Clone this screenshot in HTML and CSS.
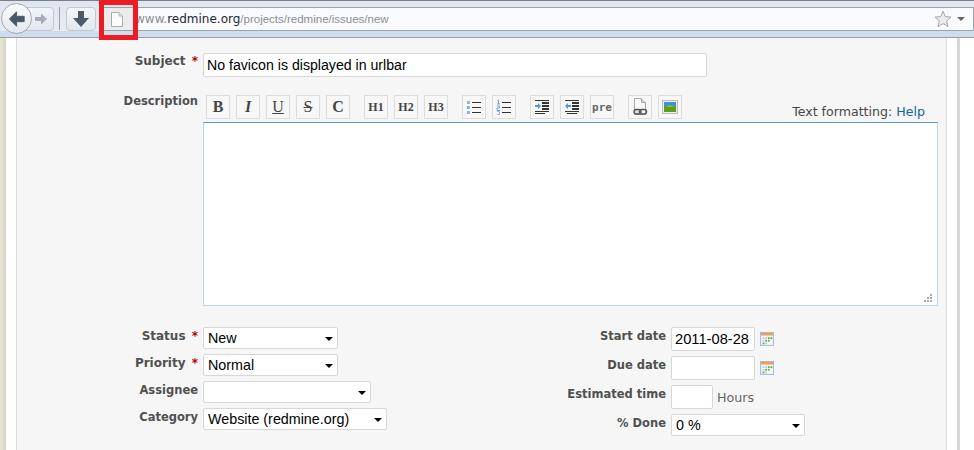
FILE: index.html
```html
<!DOCTYPE html>
<html lang="en">
<head>
<meta charset="utf-8">
<title>New issue</title>
<link rel="stylesheet" href="styles.css">
</head>
<body>
<header class="browser">
  <div class="toolbar">
    <div class="nav">
      <div class="fwd"><svg width="16" height="16" viewBox="0 0 16 16"><path d="M8 2.5 14 8 8 13.5V10H2V6H8Z" fill="#a4adb8"/></svg></div>
      <div class="back"><svg width="18" height="18" viewBox="0 0 20 20"><path d="M9.5 2 1.5 10 9.5 18V13H18V7H9.5Z" fill="#4a5866" stroke="#4a5866" stroke-linejoin="round"/></svg></div>
    </div>
    <div class="sep"></div>
    <div class="dl"><svg width="18" height="18" viewBox="0 0 18 18"><path d="M6 1H12V8H17L9 17 1 8H6Z" fill="#4d5a68"/></svg></div>
    <div class="urlbar">
      <div class="identity"><svg width="14" height="17" viewBox="0 0 14 17"><path d="M1.5 1.5H9L12.5 5V15.5H1.5Z" fill="#fbfbfb" stroke="#a9a9a9"/><path d="M9 1.5V5H12.5" fill="#e8e8e8" stroke="#b5b5b5"/></svg></div>
      <div class="url"><span class="dim">www.</span>redmine.org<span class="dim path">/projects/redmine/issues/new</span></div>
      <svg class="star" width="18" height="18" viewBox="0 0 18 18"><path d="M9 1.2 11.3 6.6 17 7.1 12.7 10.9 14 16.6 9 13.6 4 16.6 5.3 10.9 1 7.1 6.7 6.6Z" fill="#ececec" stroke="#a8a8a8"/></svg>
      <div class="drop"></div>
    </div>
  </div>
  <div class="strip"></div>
</header>

<div class="page">
  <div class="edge"></div>
  <main class="form">
    <div class="row subject-row">
      <label class="label must">Subject <span class="req">*</span></label>
      <input class="field subject" type="text" value="No favicon is displayed in urlbar">
    </div>

    <div class="row desc-head">
      <label class="label">Description</label>
      <div class="wiki">
        <div class="tools">
          <div class="group">
            <span class="tb b">B</span>
            <span class="tb i">I</span>
            <span class="tb u">U</span>
            <span class="tb s">S</span>
            <span class="tb b">C</span>
          </div>
          <div class="group">
            <span class="tb h">H1</span>
            <span class="tb h">H2</span>
            <span class="tb h">H3</span>
          </div>
          <div class="group">
            <span class="tb"><svg width="16" height="16" viewBox="0 0 16 16"><g fill="#8fb4e6"><rect x="1" y="2" width="3" height="3"/><rect x="1" y="7" width="3" height="3"/><rect x="1" y="12" width="3" height="3"/></g><g fill="#333"><rect x="6" y="3" width="9" height="1"/><rect x="6" y="8" width="9" height="1"/><rect x="6" y="13" width="9" height="1"/></g></svg></span>
            <span class="tb"><svg width="16" height="16" viewBox="0 0 16 16"><g fill="none" stroke="#6fa0e0"><path d="M1.5 1.5 2.5 1V5M1 5H4"/><path d="M1 7H3.5V9H1V11.5H4"/></g><path d="M1 12.5H3.5V15.5H1" fill="none" stroke="#8fb4e6"/><g fill="#333"><rect x="6" y="3" width="9" height="1"/><rect x="6" y="8" width="9" height="1"/><rect x="6" y="13" width="9" height="1"/></g></svg></span>
          </div>
          <div class="group">
            <span class="tb"><svg width="16" height="16" viewBox="0 0 16 16"><g fill="#333"><rect x="1" y="1" width="14" height="1"/><rect x="8" y="3" width="7" height="2"/><rect x="8" y="6" width="7" height="2"/><rect x="8" y="9" width="7" height="2"/><rect x="1" y="12" width="14" height="1"/><rect x="1" y="14" width="10" height="1"/></g><path d="M1 6H4V4L7 7 4 10V8H1Z" fill="#5b93dc"/></svg></span>
            <span class="tb"><svg width="16" height="16" viewBox="0 0 16 16"><g fill="#333"><rect x="1" y="1" width="14" height="1"/><rect x="8" y="3" width="7" height="2"/><rect x="8" y="6" width="7" height="2"/><rect x="8" y="9" width="7" height="2"/><rect x="1" y="12" width="14" height="1"/><rect x="3" y="14" width="10" height="1"/></g><path d="M7 6H4V4L1 7 4 10V8H7Z" fill="#5b93dc"/></svg></span>
            <span class="tb pre">pre</span>
          </div>
          <div class="group">
            <span class="tb"><svg width="18" height="20" viewBox="0 0 18 20"><path d="M3.5 1.5H10.5L14.5 5.5V17.5H3.5Z" fill="#fafafa" stroke="#a8a8a8"/><path d="M10.5 1.5V5.5H14.5" fill="#ddd" stroke="#a8a8a8"/><rect x="3" y="12.5" width="7" height="4.5" rx="2.2" fill="#ddd" stroke="#555" stroke-width="1.4"/><rect x="8.5" y="12.5" width="7" height="4.5" rx="2.2" fill="none" stroke="#555" stroke-width="1.4"/></svg></span>
            <span class="tb"><svg width="16" height="14" viewBox="0 0 16 14"><rect x=".5" y=".5" width="15" height="13" fill="#eee" stroke="#bbb"/><rect x="2" y="2" width="12" height="5" fill="#3f8fdc"/><rect x="2" y="6" width="12" height="6" fill="#5c9e1e"/><path d="M4 7 8 5 12 7Z" fill="#8cc43c"/></svg></span>
          </div>
        </div>
        <div class="help">Text formatting: <a href="#">Help</a></div>
      </div>
    </div>

    <div class="area">
      <textarea class="desc"></textarea>
      <svg class="grip" width="9" height="9" viewBox="0 0 9 9"><g fill="#aaa"><rect x="6" y="0" width="2" height="2"/><rect x="3" y="3" width="2" height="2"/><rect x="6" y="3" width="2" height="2"/><rect x="0" y="6" width="2" height="2"/><rect x="3" y="6" width="2" height="2"/><rect x="6" y="6" width="2" height="2"/></g></svg>
    </div>

    <div class="attrs">
      <div class="col left">
        <div class="row sel-row">
          <label class="label must">Status <span class="req">*</span></label>
          <div class="pick w-status"><select><option>New</option></select></div>
        </div>
        <div class="row sel-row">
          <label class="label must">Priority <span class="req">*</span></label>
          <div class="pick w-status"><select><option>Normal</option></select></div>
        </div>
        <div class="row sel-row">
          <label class="label">Assignee</label>
          <div class="pick w-assignee"><select><option></option></select></div>
        </div>
        <div class="row sel-row">
          <label class="label">Category</label>
          <div class="pick w-category"><select><option>Website (redmine.org)</option></select></div>
        </div>
      </div>
      <div class="col right">
        <div class="row date-row">
          <label class="label">Start date</label>
          <input class="field date" type="text" value="2011-08-28">
          <svg class="cal" width="14" height="14" viewBox="0 0 16 16"><use href="#calendar"/></svg>
        </div>
        <div class="row date-row">
          <label class="label">Due date</label>
          <input class="field date" type="text">
          <svg class="cal" width="14" height="14" viewBox="0 0 16 16"><use href="#calendar"/></svg>
        </div>
        <div class="row date-row">
          <label class="label">Estimated time</label>
          <input class="field hours" type="text">
          <span class="unit">Hours</span>
        </div>
        <div class="row sel-row">
          <label class="label">% Done</label>
          <div class="pick w-done"><select><option>0 %</option></select></div>
        </div>
      </div>
    </div>
  </main>
  <div class="gutter"></div>
</div>

<div class="marker"></div>

<svg class="defs" width="0" height="0">
  <symbol id="calendar" viewBox="0 0 16 16">
    <rect x=".5" y=".5" width="15" height="15" fill="#e4eefa" stroke="#9db8d8"/>
    <rect x="1" y="1" width="14" height="3" fill="#ef9d5b"/>
    <rect x="2" y="5" width="12" height="9" fill="#f8f8f8"/>
    <g fill="#b9c6d6"><rect x="3" y="6" width="2" height="2"/><rect x="6" y="6" width="2" height="2"/><rect x="3" y="9" width="2" height="2"/><rect x="6" y="12" width="2" height="2"/></g>
    <g fill="#62a83c"><rect x="9" y="6" width="2" height="2"/><rect x="12" y="6" width="2" height="2"/><rect x="9" y="9" width="2" height="2"/><rect x="6" y="9" width="2" height="2"/><rect x="3" y="12" width="2" height="2"/></g>
  </symbol>
</svg>
</body>
</html>
```
FILE: styles.css
```css
* { box-sizing: border-box; }
html, body { margin: 0; height: 100%; }
body {
  width: 974px;
  height: 450px;
  overflow: hidden;
  position: relative;
  background: #fff;
  font-family: "DejaVu Sans", sans-serif;
  font-size: 12px;
  color: #484848;
}

/* browser chrome */
.browser { height: 38px; border-bottom: 1px solid #9a9fa6; }
.toolbar {
  height: 31px;
  display: flex;
  align-items: flex-end;
  background: linear-gradient(#dfe6ef, #e8edf4);
  border-top: 1px solid #7c8188;
}
.strip { height: 6px; background: #cfdcee; }
.nav { width: 59px; height: 30px; position: relative; flex: none; align-self: flex-end; }
.back {
  position: absolute;
  left: 1px;
  top: 2px;
  width: 31px;
  height: 31px;
  border-radius: 50%;
  background: linear-gradient(#fafbfc, #e4e8ec);
  border: 1px solid #a4a9b0;
  display: flex;
  align-items: center;
  justify-content: center;
  z-index: 1;
}
.fwd {
  position: absolute;
  left: 20px;
  top: 6px;
  width: 34px;
  height: 24px;
  border: 1px solid #c2c8d0;
  border-radius: 4px;
  background: linear-gradient(#f1f4f8, #e2e7ee);
  display: flex;
  align-items: center;
  justify-content: flex-end;
  padding-right: 4px;
}
.sep { width: 1px; height: 23px; margin-bottom: 1px; background: #9aa0a8; flex: none; }
.dl {
  width: 30px;
  height: 24px;
  margin: 0 3px 0 6px;
  border: 1px solid #c2c8d0;
  border-radius: 4px;
  background: linear-gradient(#f3f6f9, #e3e8ee);
  display: flex;
  align-items: center;
  justify-content: center;
  flex: none;
}
.urlbar {
  flex: 1;
  height: 24px;
  display: flex;
  align-items: center;
  margin-left: 4px;
  background: linear-gradient(#f8f9fc, #fbfcfe);
  border-top: 1px solid #9da3ab;
  border-right: 1px solid #9da3ab;
  border-bottom: 1px solid #9da3ab;
}
.identity {
  width: 31px;
  height: 22px;
  display: flex;
  align-items: center;
  justify-content: center;
  padding-right: 3px;
  background: #ececec;
  flex: none;
}
.url { flex: 1; padding-left: 1px; color: #1d2733; white-space: nowrap; }
.dim { color: #8a8f96; }
.path { font-family: "Liberation Sans", sans-serif; font-size: 11.5px; }
.star { flex: none; margin-right: 5px; }
.drop {
  width: 0;
  height: 0;
  border: 4px solid transparent;
  border-top: 4px solid #666;
  border-bottom: 0;
  margin-right: 8px;
  flex: none;
}

/* page */
.page { display: flex; height: 412px; }
.edge { width: 6px; background: linear-gradient(90deg, #e8e6d6, #d9d6c2); flex: none; margin-right: 10px; }
.form {
  width: 931px;
  background: #f6f6f6;
  border-left: 1px solid #dcdcdc;
  border-right: 1px solid #dcdcdc;
  padding-top: 15px;
  flex: none;
}
.gutter { width: 3px; margin-left: 10px; background: #d8d8d8; flex: none; }

.row { display: flex; }
.label {
  width: 186px;
  padding-right: 5px;
  text-align: right;
  font-size: 11.5px;
  font-weight: bold;
  color: #505050;
  flex: none;
  line-height: 16px;
}
.must { font-size: 12px; }
.req { color: #bb0000; margin-left: 2px; }
.field {
  border: 1px solid #d7d7d7;
  border-radius: 2px;
  background: #fff;
  padding: 0 3px;
  font-family: "Liberation Sans", sans-serif;
  font-size: 14.15px;
  color: #000;
  outline: none;
}
.subject-row { height: 42px; }
.subject { width: 504px; height: 24px; }
.desc-head { height: 27px; }
.desc-head .label { line-height: 12px; }
.wiki { flex: 1; display: flex; padding-left: 3px; position: relative; }
.tools { display: flex; gap: 14px; }
.group { display: flex; gap: 6px; }
.tb {
  width: 24px;
  height: 24px;
  border: 1px solid #dcdcdc;
  background: #f7f7f7;
  display: flex;
  align-items: center;
  justify-content: center;
  font-family: "Liberation Serif", serif;
  font-weight: bold;
  font-size: 16px;
  color: #444;
}
.tb.i { font-style: italic; }
.tb.u { font-weight: normal; text-decoration: underline; }
.tb.s { font-weight: normal; text-decoration: line-through; }
.tb.h { font-size: 12px; }
.tb.pre { font-family: "DejaVu Sans Mono", monospace; font-size: 11px; color: #666; }
.help { position: absolute; right: 21px; top: 9px; font-size: 12.6px; line-height: 16px; }
.help a { color: #116699; text-decoration: none; }

.area { margin-left: 186px; width: 735px; height: 184px; position: relative; }
.desc {
  display: block;
  width: 100%;
  height: 100%;
  resize: none;
  outline: none;
  background: #fff;
  border: 1px solid #bcd9ec;
  border-top-color: #5f9ac0;
}
.grip { position: absolute; right: 5px; bottom: 3px; }

.attrs { display: flex; margin-top: 21px; }
.col { display: flex; flex-direction: column; }
.left { width: 468px; gap: 5px; }
.sel-row { height: 22px; }
.date-row { height: 24px; margin-bottom: 5px; }
.sel-row .label, .date-row .label { padding-top: 1px; }
.pick { position: relative; height: 22px; }
.pick::after {
  content: "";
  position: absolute;
  right: 5px;
  top: 10px;
  border: 4px solid transparent;
  border-top: 4px solid #000;
  border-bottom: 0;
  pointer-events: none;
}
.pick select {
  appearance: none;
  width: 100%;
  height: 100%;
  border: 1px solid #d7d7d7;
  border-radius: 2px;
  background: #fff;
  padding: 0 4px;
  font-family: "Liberation Sans", sans-serif;
  font-size: 14.3px;
  color: #000;
  outline: none;
}
.w-status { width: 135px; }
.w-assignee { width: 168px; }
.w-category { width: 184px; }
.w-done { width: 134px; }
.date { width: 84px; height: 24px; font-size: 14.7px; }
.hours { width: 42px; height: 24px; }
.cal { margin: 5px 0 0 5px; }
.unit { margin-left: 4px; padding-top: 5px; font-size: 12.7px; color: #666; }
.defs { position: absolute; }

/* annotation drawn over the screenshot */
.marker {
  position: absolute;
  left: 99px;
  top: 0;
  width: 39px;
  height: 40px;
  border: 5px solid #ed1c24;
}
```
